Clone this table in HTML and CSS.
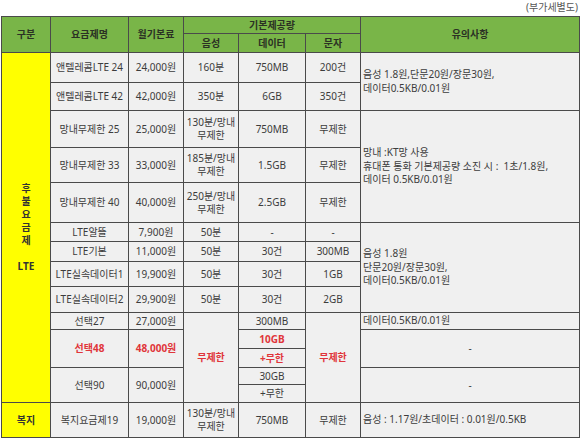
FILE: index.html
```html
<!DOCTYPE html>
<html lang="ko">
<head>
<meta charset="utf-8">
<title>요금제 표</title>
<link rel="stylesheet" href="styles.css">
</head>
<body>
<div class="page">
  <div class="note">(부가세별도)</div>
  <table class="plans">
    <colgroup>
      <col class="c-cat"><col class="c-name"><col class="c-fee"><col class="c-voice"><col class="c-data"><col class="c-sms"><col class="c-memo">
    </colgroup>
    <thead>
      <tr class="h17">
        <th rowspan="2">구분</th>
        <th rowspan="2">요금제명</th>
        <th rowspan="2">월기본료</th>
        <th colspan="3">기본제공량</th>
        <th rowspan="2">유의사항</th>
      </tr>
      <tr class="h19">
        <th>음성</th>
        <th>데이터</th>
        <th>문자</th>
      </tr>
    </thead>
    <tbody>
      <tr class="h30">
        <td rowspan="14" class="cat">후<br>불<br>요<br>금<br>제<br><br>LTE</td>
        <td>앤텔레콤LTE 24</td><td>24,000원</td><td>160분</td><td>750MB</td><td>200건</td>
        <td rowspan="2" class="memo">음성 1.8원,단문20원/장문30원,<br>데이터0.5KB/0.01원</td>
      </tr>
      <tr class="h28">
        <td>앤텔레콤LTE 42</td><td>42,000원</td><td>350분</td><td>6GB</td><td>350건</td>
      </tr>
      <tr class="h37">
        <td>망내무제한 25</td><td>25,000원</td><td>130분/망내<br>무제한</td><td>750MB</td><td>무제한</td>
        <td rowspan="3" class="memo">망내 :KT망 사용<br>휴대폰 통화 기본제공량 소진 시 :&nbsp; 1초/1.8원,<br>데이터 0.5KB/0.01원</td>
      </tr>
      <tr class="h35">
        <td>망내무제한 33</td><td>33,000원</td><td>185분/망내<br>무제한</td><td>1.5GB</td><td>무제한</td>
      </tr>
      <tr class="h40">
        <td>망내무제한 40</td><td>40,000원</td><td>250분/망내<br>무제한</td><td>2.5GB</td><td>무제한</td>
      </tr>
      <tr class="h19">
        <td>LTE알뜰</td><td>7,900원</td><td>50분</td><td>-</td><td>-</td>
        <td rowspan="4" class="memo">음성 1.8원<br>단문20원/장문30원,<br>데이터0.5KB/0.01원</td>
      </tr>
      <tr class="h20">
        <td>LTE기본</td><td>11,000원</td><td>50분</td><td>30건</td><td>300MB</td>
      </tr>
      <tr class="h25">
        <td>LTE실속데이터1</td><td>19,900원</td><td>50분</td><td>30건</td><td>1GB</td>
      </tr>
      <tr class="h26">
        <td>LTE실속데이터2</td><td>29,900원</td><td>50분</td><td>30건</td><td>2GB</td>
      </tr>
      <tr class="h17">
        <td>선택27</td><td>27,000원</td>
        <td rowspan="5" class="hot">무제한</td>
        <td>300MB</td>
        <td rowspan="5" class="hot">무제한</td>
        <td class="memo">데이터0.5KB/0.01원</td>
      </tr>
      <tr class="h19">
        <td rowspan="2" class="hot">선택48</td><td rowspan="2" class="hot">48,000원</td>
        <td class="hot">10GB</td>
        <td rowspan="2">-</td>
      </tr>
      <tr class="h19">
        <td class="hot">+무한</td>
      </tr>
      <tr class="h17">
        <td rowspan="2">선택90</td><td rowspan="2">90,000원</td>
        <td>30GB</td>
        <td rowspan="2">-</td>
      </tr>
      <tr class="h18">
        <td>+무한</td>
      </tr>
      <tr class="h35">
        <td class="cat">복지</td>
        <td>복지요금제19</td><td>19,000원</td><td>130분/망내<br>무제한</td><td>750MB</td><td>무제한</td>
        <td class="memo">음성 : 1.17원/초데이터 : 0.01원/0.5KB</td>
      </tr>
    </tbody>
  </table>
</div>
</body>
</html>
```

FILE: styles.css
```css
html, body {
  margin: 0;
  padding: 0;
  background: #ffffff;
}
.page {
  width: 580px;
  font-family: "Noto Sans", "Noto Sans CJK KR", sans-serif;
  font-size: 10px;
  color: #3c3c3c;
}
.note {
  height: 16px;
  line-height: 14px;
  text-align: right;
  padding-right: 2px;
  color: #555555;
  font-size: 10px;
}
.plans {
  border-collapse: collapse;
  table-layout: fixed;
  width: 578px;
  margin-left: 1px;
  border: 1px solid #2e2e2e;
}
.c-cat { width: 49px; }
.c-name { width: 78px; }
.c-fee { width: 55px; }
.c-voice { width: 55px; }
.c-data { width: 67px; }
.c-sms { width: 55px; }
.c-memo { width: 219px; }
.plans th,
.plans td {
  border: 1px solid #4a4a4a;
  padding: 0;
  text-align: center;
  vertical-align: middle;
  line-height: 13px;
  white-space: nowrap;
  overflow: hidden;
}
.plans th {
  background: #79b548;
  color: #2b3124;
  font-weight: bold;
  font-size: 10px;
}
.plans td {
  background: #f0f0f0;
}
.plans td.cat {
  background: #ffff00;
  color: #333333;
  font-weight: bold;
}
.plans td.memo {
  text-align: left;
  padding-left: 2px;
  line-height: 13.5px;
}
.plans td.hot {
  color: #e0353a;
  font-weight: bold;
}
.h17 { height: 17px; }
.h18 { height: 18px; }
.h19 { height: 19px; }
.h20 { height: 20px; }
.h25 { height: 25px; }
.h26 { height: 26px; }
.h28 { height: 28px; }
.h30 { height: 30px; }
.h35 { height: 35px; }
.h37 { height: 37px; }
.h40 { height: 40px; }
```
